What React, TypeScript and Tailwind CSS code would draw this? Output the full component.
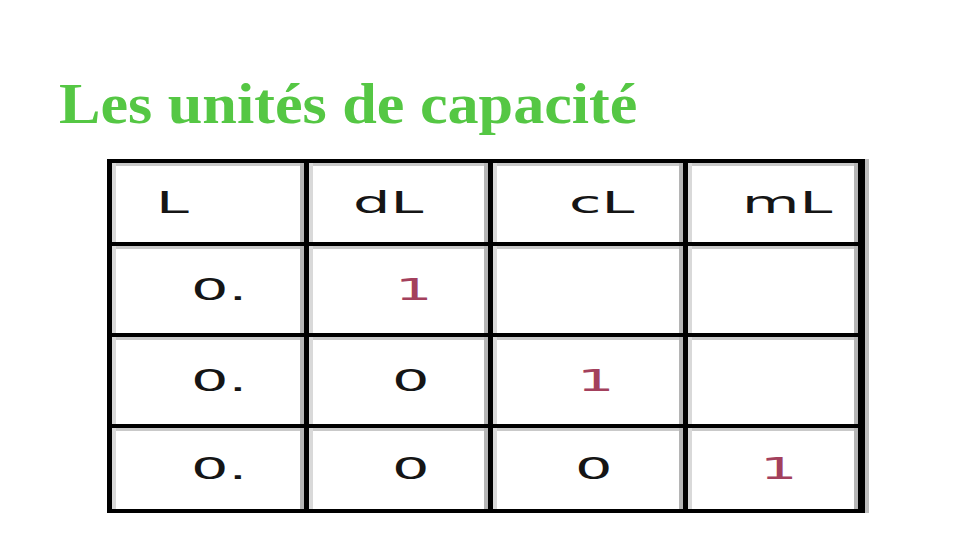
const rows: { text: string; red?: boolean; pl: number }[][] = [
  [
    { text: "L", pl: 44 },
    { text: "dL", pl: 44 },
    { text: "cL", pl: 76 },
    { text: "mL", pl: 54 },
  ],
  [
    { text: "0.", pl: 79 },
    { text: "1", red: true, pl: 86 },
    { text: "", pl: 0 },
    { text: "", pl: 0 },
  ],
  [
    { text: "0.", pl: 79 },
    { text: "0", pl: 83 },
    { text: "1", red: true, pl: 84 },
    { text: "", pl: 0 },
  ],
  [
    { text: "0.", pl: 79 },
    { text: "0", pl: 83 },
    { text: "0", pl: 82 },
    { text: "1", red: true, pl: 72 },
  ],
];

export default function App() {
  return (
    <div className="w-[960px] h-[540px] bg-white overflow-hidden">
      <h1
        className="mt-[76px] ml-[59px] h-[56px] w-fit origin-left scale-x-[1.11] text-[56px] leading-none font-bold text-[#55c744]"
        style={{ fontFamily: '"Liberation Serif", "Times New Roman", serif' }}
      >
        Les unités de capacité
      </h1>
      <div className="mt-[27px] ml-[107px] w-fit bg-black p-[4px] pl-[5px] pr-[7px] grid grid-cols-[192px_179px_190px_170px] grid-rows-[79px_87px_87px_81px] gap-x-[5px] gap-y-[4px] shadow-[4px_0_0_#bdbdbd]">
        {rows.flatMap((row, r) =>
          row.map((cell, c) => (
            <div
              key={`${r}-${c}`}
              className="bg-white flex items-center shadow-[inset_4px_0_0_#d9d9d9,inset_-4px_0_0_#b5b5b5,inset_0_3px_0_#c9c9c9]"
            >
              {cell.text && (
                <span
                  className={`inline-block origin-left scale-x-[1.9] text-[31px] leading-none ${
                    cell.red ? "text-[#a3405c]" : "text-[#151515]"
                  }`}
                  style={{
                    marginLeft: cell.pl,
                    fontFamily: '"DejaVu Sans", "Liberation Sans", sans-serif',
                  }}
                >
                  {cell.text}
                </span>
              )}
            </div>
          ))
        )}
      </div>
    </div>
  );
}
